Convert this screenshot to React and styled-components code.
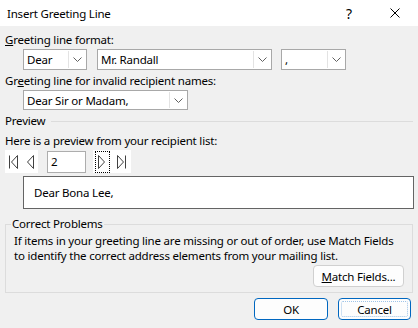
import React from "react";
import styled, { createGlobalStyle } from "styled-components";

const GlobalStyle = createGlobalStyle`
  html, body {
    margin: 0;
    padding: 0;
    background: #f0f0f0;
  }
  body {
    font-family: "Noto Sans", "Open Sans", sans-serif;
    font-size: 11.5px;
    letter-spacing: -0.2px;
    color: #000;
  }
`;

const Window = styled.div`
  width: 418px;
  height: 328px;
  background: #f0f0f0;
  display: flex;
  flex-direction: column;
  overflow: hidden;
`;

const TitleBar = styled.div`
  height: 26px;
  background: #ffffff;
  display: flex;
  align-items: center;
  padding-left: 7px;
  flex-shrink: 0;
`;

const Title = styled.div`
  flex: 1;
`;

const TitleButton = styled.div`
  width: 46px;
  height: 26px;
  display: flex;
  align-items: center;
  justify-content: center;
  font-size: 14px;
`;

const Body = styled.div`
  padding: 6px 5px 0 5px;
  display: flex;
  flex-direction: column;
`;

const Label = styled.div`
  line-height: 16px;
  margin-top: ${(p) => p.$mt || 0}px;
  white-space: nowrap;
`;

const Row = styled.div`
  display: flex;
  align-items: center;
  gap: ${(p) => p.$gap || 0}px;
  margin-left: ${(p) => p.$ml || 0}px;
  margin-top: ${(p) => p.$mt || 0}px;
`;

const Combo = styled.div`
  width: ${(p) => p.$w}px;
  height: ${(p) => p.$h || 21}px;
  box-sizing: border-box;
  border: 1px solid #a8a8a8;
  background: #ffffff;
  display: flex;
  align-items: stretch;
  margin-right: ${(p) => p.$mr || 0}px;
`;

const ComboText = styled.div`
  flex: 1;
  padding-left: 3px;
  display: flex;
  align-items: center;
  white-space: nowrap;
`;

const ComboArrow = styled.div`
  width: 16px;
  border-left: 1px solid #e3e3e3;
  margin: 1px;
  display: flex;
  align-items: center;
  justify-content: center;
`;

const SectionHead = styled.div`
  display: flex;
  align-items: center;
  gap: 6px;
  margin-top: 3px;
  line-height: 16px;
`;

const Rule = styled.div`
  flex: 1;
  height: 1px;
  background: #dcdcdc;
  margin-top: 1px;
`;

const NavGroup = styled.div`
  background: #ffffff;
  height: 23px;
  display: flex;
  align-items: center;
  padding: 0 ${(p) => p.$pad || 2}px;
  gap: ${(p) => p.$gap || 4}px;
`;

const NavBtn = styled.div`
  width: 15px;
  height: 22px;
  box-sizing: border-box;
  display: flex;
  align-items: center;
  justify-content: center;
  border: 1px dotted ${(p) => (p.$focus ? "#000" : "transparent")};
`;

const NumberBox = styled.div`
  width: 39px;
  height: 22px;
  box-sizing: border-box;
  border: 1px solid #adadad;
  background: #fff;
  padding-left: 3px;
  display: flex;
  align-items: center;
  margin: 0 7px 0 9px;
`;

const PreviewBox = styled.div`
  margin: 3px 0 0 18px;
  width: 391px;
  height: 33px;
  box-sizing: border-box;
  border: 1px solid #646464;
  background: #ffffff;
  display: flex;
  align-items: center;
  padding-left: 10px;
`;

const Group = styled.fieldset`
  margin: 7px 0 0 0;
  width: 408px;
  height: 77px;
  box-sizing: border-box;
  border: 1px solid #dcdcdc;
  border-radius: 0;
  padding: 0 8px 0 8px;
  display: flex;
  flex-direction: column;
`;

const Legend = styled.legend`
  padding: 0 1px;
  margin-left: -3px;
  line-height: 16px;
`;

const Paragraph = styled.div`
  line-height: 15px;
  margin-top: 1px;
  white-space: nowrap;
`;

const ButtonRow = styled.div`
  display: flex;
  justify-content: flex-end;
  gap: ${(p) => p.$gap || 0}px;
  margin-top: ${(p) => p.$mt || 0}px;
  padding-right: ${(p) => p.$pr || 0}px;
`;

const Button = styled.div`
  width: ${(p) => p.$w}px;
  height: 22px;
  box-sizing: border-box;
  border: 1px solid ${(p) => (p.$primary ? "#0067c0" : "#d0d0d0")};
  border-radius: 4px;
  background: #fdfdfd;
  display: flex;
  align-items: center;
  justify-content: center;
  position: relative;
`;

const FocusRing = styled.span`
  position: absolute;
  inset: 2px;
  border: 1px dotted #9fc4e8;
  border-radius: 2px;
`;

const Chevron = () => (
  <svg width="9" height="5" viewBox="0 0 9 5">
    <path d="M0.5 0.5 L4.5 4.5 L8.5 0.5" fill="none" stroke="#606060" strokeWidth="1" />
  </svg>
);

const NavIcon = ({ dir, bar }) => (
  <svg width="9" height="14" viewBox="0 0 9 14">
    {dir === "left" ? (
      <>
        {bar && <path d="M0.5 0.5 V13.5" stroke="#404040" strokeWidth="1" />}
        <path d="M8.5 0.5 L2.5 7 L8.5 13.5 Z" fill="none" stroke="#404040" strokeWidth="1" />
      </>
    ) : (
      <>
        <path d="M0.5 0.5 L6.5 7 L0.5 13.5 Z" fill="none" stroke="#404040" strokeWidth="1" />
        {bar && <path d="M8.5 0.5 V13.5" stroke="#404040" strokeWidth="1" />}
      </>
    )}
  </svg>
);

const CloseIcon = () => (
  <svg width="10" height="10" viewBox="0 0 10 10">
    <path d="M0.5 0.5 L9.5 9.5 M9.5 0.5 L0.5 9.5" stroke="#000" strokeWidth="1" />
  </svg>
);

function ComboBox({ w, h, mr, value }) {
  return (
    <Combo $w={w} $h={h} $mr={mr}>
      <ComboText>{value}</ComboText>
      <ComboArrow>
        <Chevron />
      </ComboArrow>
    </Combo>
  );
}

function App() {
  return (
    <Window>
      <GlobalStyle />
      <TitleBar>
        <Title>Insert Greeting Line</Title>
        <TitleButton>?</TitleButton>
        <TitleButton>
          <CloseIcon />
        </TitleButton>
      </TitleBar>
      <Body>
        <Label>
          <u>G</u>reeting line format:
        </Label>
        <Row $ml={18} $mt={1}>
          <ComboBox w={64} mr={10} value="Dear" />
          <ComboBox w={175} mr={9} value="Mr. Randall" />
          <ComboBox w={65} value="," />
        </Row>
        <Label $mt={3}>
          Gr<u>e</u>eting line for invalid recipient names:
        </Label>
        <Row $ml={18} $mt={1}>
          <ComboBox w={165} h={20} value="Dear Sir or Madam," />
        </Row>
        <SectionHead>
          Preview
          <Rule />
        </SectionHead>
        <Label $mt={4}>Here is a preview from your recipient list:</Label>
        <Row $mt={1}>
          <NavGroup $pad={1} $gap={1}>
            <NavBtn>
              <NavIcon dir="left" bar />
            </NavBtn>
            <NavBtn>
              <NavIcon dir="left" />
            </NavBtn>
          </NavGroup>
          <NumberBox>2</NumberBox>
          <NavGroup $pad={2} $gap={0}>
            <NavBtn $focus>
              <NavIcon dir="right" />
            </NavBtn>
            <NavBtn>
              <NavIcon dir="right" bar />
            </NavBtn>
          </NavGroup>
        </Row>
        <PreviewBox>Dear Bona Lee,</PreviewBox>
        <Group>
          <Legend>Correct Problems</Legend>
          <Paragraph>
            If items in your greeting line are missing or out of order, use Match Fields
            <br />
            to identify the correct address elements from your mailing list.
          </Paragraph>
          <ButtonRow $mt={2}>
            <Button $w={91}>
              <span>
                <u>M</u>atch Fields...
              </span>
            </Button>
          </ButtonRow>
        </Group>
        <ButtonRow $mt={5} $gap={10} $pr={2}>
          <Button $w={74} $primary>
            OK
          </Button>
          <Button $w={73} $primary>
            <FocusRing />
            Cancel
          </Button>
        </ButtonRow>
      </Body>
    </Window>
  );
}

export default App;
